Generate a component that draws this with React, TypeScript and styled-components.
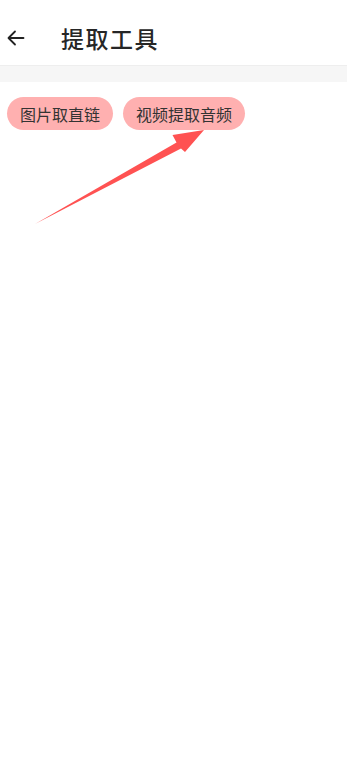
import React from "react";
import styled, { createGlobalStyle } from "styled-components";

const GlobalStyle = createGlobalStyle`
    html, body {
        margin: 0;
        padding: 0;
        background: #ffffff;
        font-family: "Noto Sans CJK SC", "Noto Sans", sans-serif;
    }
`

const Page = styled.div`
    width: 347px;
    min-height: 768px;
    background: #ffffff;
    position: relative;
    overflow: hidden;
`
const Header = styled.header`
    height: 66px;
    display: flex;
    align-items: center;
    padding: 10px 0 0 5px;
    box-sizing: border-box;
    border-bottom: 1px solid #eeeeee;
`
const BackButton = styled.button`
    width: 22px;
    height: 22px;
    padding: 0;
    border: none;
    background: none;
    display: flex;
    align-items: center;
    justify-content: center;
`
const Title = styled.h1`
    margin: 0 0 0 34px;
    font-size: 23px;
    font-weight: 500;
    color: #262626;
    letter-spacing: 1.5px;
`
const Divider = styled.div`
    height: 16px;
    background: #f6f6f6;
`
const Tags = styled.div`
    display: flex;
    gap: 10px;
    padding: 15px 7px;
`
const Tag = styled.button`
    height: 33px;
    padding: 0 13px;
    border: none;
    border-radius: 17px;
    background: #ffb0b0;
    color: #333333;
    font-family: "Noto Sans CJK SC", sans-serif;
    font-size: 16px;
    letter-spacing: 0;
`
const Pointer = styled.svg`
    position: absolute;
    left: 0;
    top: 0;
    pointer-events: none;
`

export default function App() {
    return (
        <Page>
            <GlobalStyle />
            <Header>
                <BackButton>
                    <svg width="18" height="16" viewBox="0 0 18 16" fill="none" stroke="#222" strokeWidth="1.8" strokeLinecap="round" strokeLinejoin="round">
                        <path d="M16.5 8H2" />
                        <path d="M8 1.5L1.5 8L8 14.5" />
                    </svg>
                </BackButton>
                <Title>提取工具</Title>
            </Header>
            <Divider />
            <Tags>
                <Tag>图片取直链</Tag>
                <Tag>视频提取音频</Tag>
            </Tags>
            <Pointer width="347" height="260" viewBox="0 0 347 260">
                <path d="M35 224 L176.5 142.5 L172.5 135 L204 130 L185 152 L181 148.5 Z" fill="#ff5252" />
            </Pointer>
        </Page>
    )
}
